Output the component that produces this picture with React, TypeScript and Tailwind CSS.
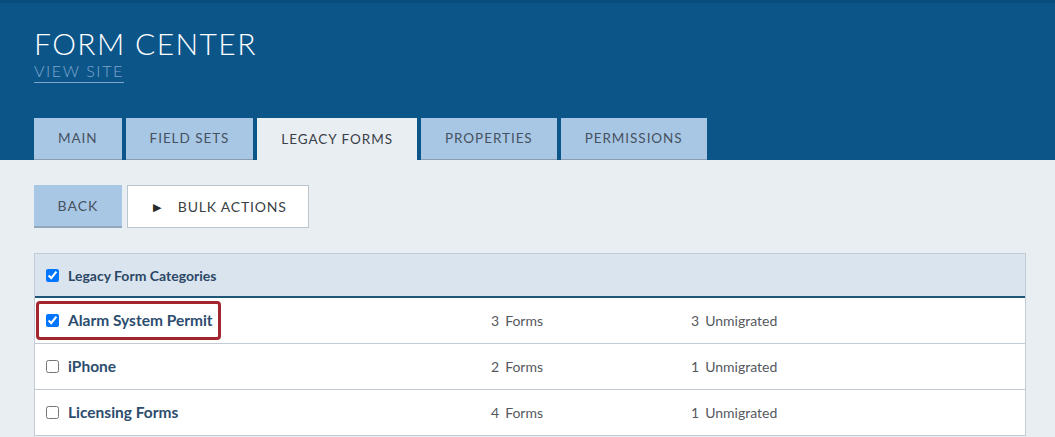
import React from "react";

const tabs = ["MAIN", "FIELD SETS", "LEGACY FORMS", "PROPERTIES", "PERMISSIONS"];

const rows = [
  { name: "Alarm System Permit", forms: 3, unmigrated: 3, checked: true, highlight: true },
  { name: "iPhone", forms: 2, unmigrated: 1, checked: false, highlight: false },
  { name: "Licensing Forms", forms: 4, unmigrated: 1, checked: false, highlight: false },
];

export default function App() {
  return (
    <div className="min-h-screen bg-[#e9eef3] font-['Lato','Open_Sans',sans-serif]">
      {/* Header */}
      <header className="flex h-[160px] flex-col border-t-[3px] border-[#0a4c7c] bg-[#0c5589] px-[34px] pt-[25px]">
        <h1 className="text-[30px] font-light leading-[30px] tracking-[1.4px] text-white">FORM CENTER</h1>
        <div className="mt-[1px]">
          <a className="inline-block border-b border-[#7ea6cd] pb-[3px] text-[16px] font-light leading-[16px] tracking-[1.6px] text-[#7ea6cd]">
            VIEW SITE
          </a>
        </div>
        <nav className="mt-auto flex gap-1">
          {tabs.map((t) => {
            const active = t === "LEGACY FORMS";
            return (
              <div
                key={t}
                className={
                  active
                    ? "flex h-[42px] items-center bg-[#e9eef3] px-6 text-[13.5px] tracking-[0.95px] text-[#3a4047]"
                    : "flex h-[42px] items-center border-b border-[#8a9eb3] bg-[#a8c7e5] px-6 text-[13.5px] tracking-[0.95px] text-[#46525f]"
                }
              >
                {t}
              </div>
            );
          })}
        </nav>
      </header>

      {/* Content */}
      <main className="px-[34px] pt-[25px]">
        <div className="flex gap-[5px]">
          <button className="h-[43px] w-[88px] border-b-2 border-[#91a7bd] bg-[#a8c7e5] text-[14px] tracking-[1px] text-[#46525f]">
            BACK
          </button>
          <button className="flex h-[43px] w-[182px] items-center border border-[#bcc5ce] bg-white pl-[25px] text-[14px] tracking-[0.8px] text-[#3a3f45]">
            <span className="mr-[16px] text-[11px] leading-none text-[#2b2b2b]">▶</span>
            BULK ACTIONS
          </button>
        </div>

        <div className="mt-[25px] w-[992px] border-x border-t border-[#c3ccd6] bg-white">
          <div className="flex h-[44px] items-center border-b-2 border-[#1d5677] bg-[#dae4ef] pl-[11px]">
            <input type="checkbox" defaultChecked className="h-[13px] w-[13px]" />
            <span className="ml-[9px] text-[14px] font-bold text-[#2b4765]">Legacy Form Categories</span>
          </div>
          {rows.map((r) => (
            <div
              key={r.name}
              className="grid h-[46px] grid-cols-[456px_200px_1fr] items-center border-b border-[#c3ccd6] text-[14px]"
            >
              <div className="pl-[11px]">
                <div className="relative inline-flex items-center">
                  <input type="checkbox" defaultChecked={r.checked} className="h-[13px] w-[13px]" />
                  <span className="ml-[9px] text-[15.5px] font-bold text-[#2c4d6e]">{r.name}</span>
                  {r.highlight && (
                    <span className="pointer-events-none absolute -top-[8px] -bottom-[8px] -left-[10px] -right-[8px] rounded-[4px] border-[3px] border-[#a3262e]" />
                  )}
                </div>
              </div>
              <div className="text-[#55595e]">
                <span className="mr-[6px]">{r.forms}</span>Forms
              </div>
              <div className="text-[#55595e]">
                <span className="mr-[6px]">{r.unmigrated}</span>Unmigrated
              </div>
            </div>
          ))}
        </div>
      </main>
    </div>
  );
}
